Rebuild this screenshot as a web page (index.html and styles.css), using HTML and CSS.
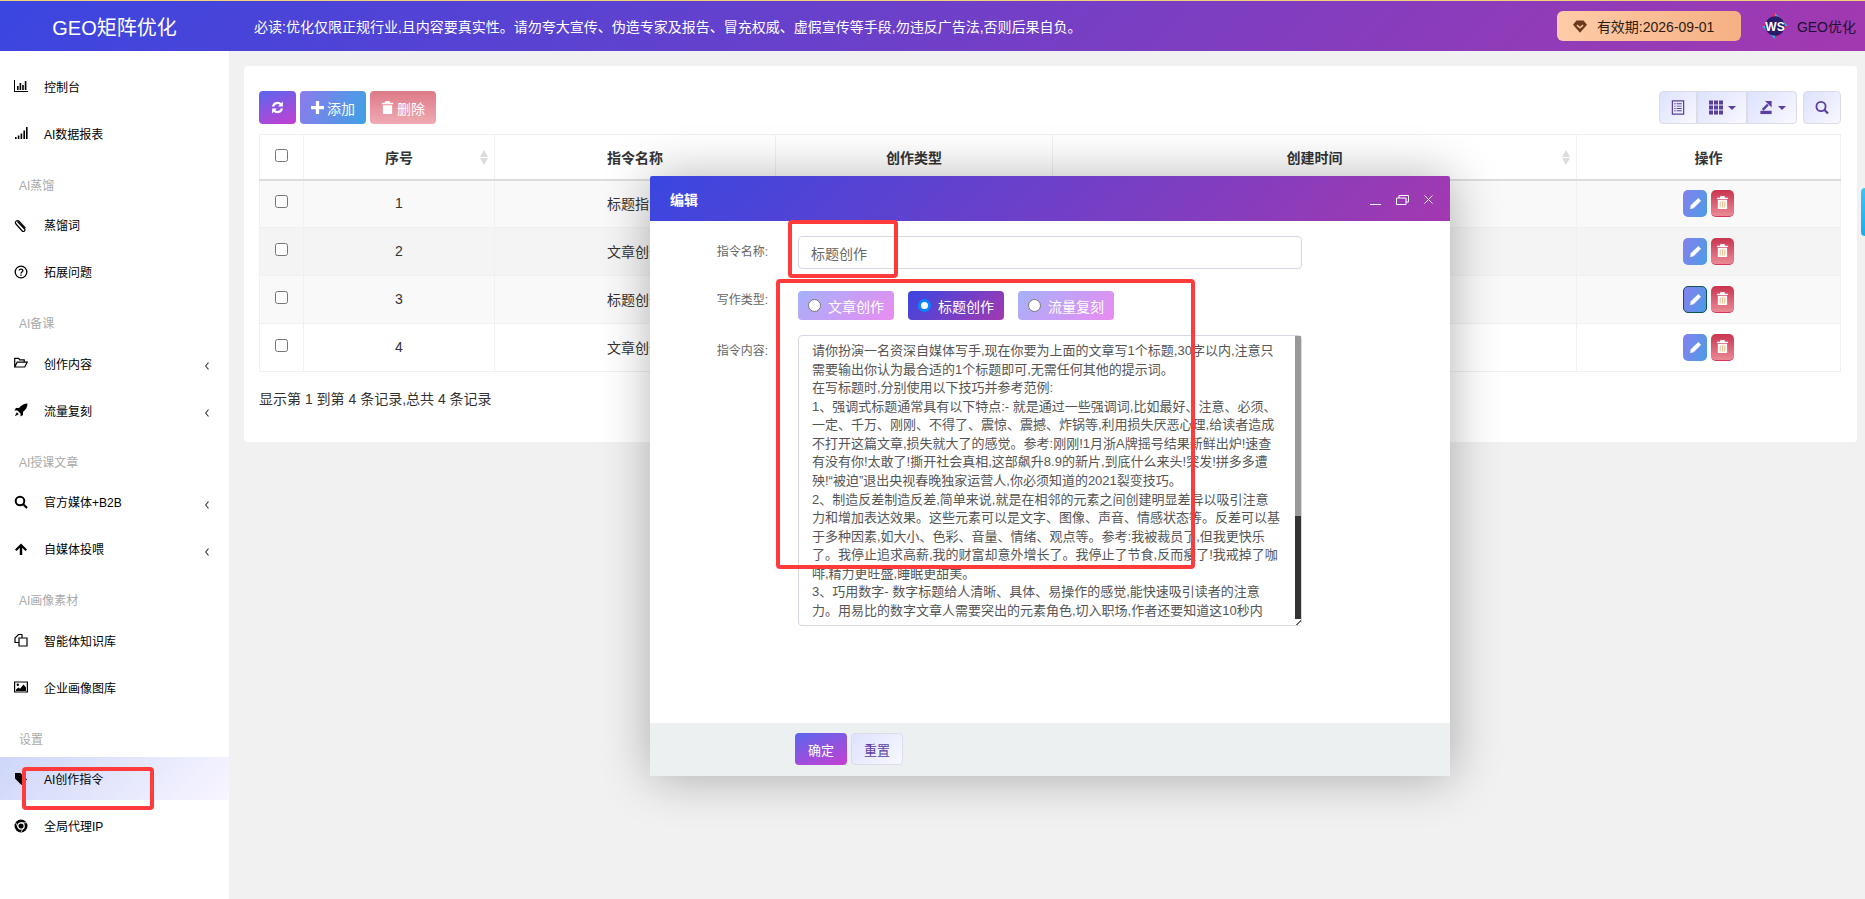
FILE: index.html
```html
<!DOCTYPE html>
<html lang="zh-CN">
<head>
    <meta charset="UTF-8">
    <meta name="viewport" content="width=device-width, initial-scale=1.0">
    <title>AI创作指令</title>
    <link rel="stylesheet" href="styles.css">
</head>
<body>
    <header class="topbar">
        <div class="logo">GEO矩阵优化</div>
        <div class="notice">必读:优化仅限正规行业,且内容要真实性。请勿夸大宣传、伪造专家及报告、冒充权威、虚假宣传等手段,勿违反广告法,否则后果自负。</div>
        <div class="expire">
            <svg class="expire-icon" viewBox="0 0 16 14"><path d="M4 0h8l4 5-8 9-8-9z" fill="#6b3a1c"/><path d="M4.500 5.500 8 8.500l3.500-3" fill="none" stroke="#f7c09a" stroke-width="1.800"/></svg>
            <span>有效期:2026-09-01</span>
        </div>
        <svg class="avatar" viewBox="0 0 26 26">
            <path d="M13 0 26 13 13 26 0 13z" fill="#e0245e"/>
            <path d="M13 0 26 13H21L13 5zM0 13l13 13v-5L5 13z" fill="#25b5f0"/>
            <circle cx="13" cy="13" r="9.800" fill="#2a1a6b"/>
            <text x="13" y="17.500" class="avatar-text">WS</text>
        </svg>
        <div class="user-name">GEO优化</div>
    </header>

    <div class="layout">
        <aside class="sidebar">
            <div class="nav-item">
                <svg class="nav-icon" viewBox="0 0 14 14"><path d="M0 1h1v11h13v1H0z"/><path d="M3 7h1.600v4H3zM5.600 4h1.600v7H5.600zM8.200 6h1.600v5H8.200zM10.800 2h1.600v9h-1.600z"/></svg>
                <span>控制台</span>
            </div>
            <div class="nav-item">
                <svg class="nav-icon" viewBox="0 0 14 14"><path d="M1 11h1.600v2H1zM3.800 9.500h1.600V13H3.800zM6.600 7.500h1.600V13H6.600zM9.400 4.500H11V13H9.400zM12 1h1.600v12H12z"/></svg>
                <span>AI数据报表</span>
            </div>

            <div class="nav-title">AI蒸馏</div>
            <div class="nav-item">
                <svg class="nav-icon" viewBox="0 0 14 14"><path d="M3.500 3.500 10.500 11a1.500 1.500 0 0 1-2.300 2L2 6a2 2 0 0 1 3-2.800l6.500 7" fill="none" stroke="#000" stroke-width="1.200"/></svg>
                <span>蒸馏词</span>
            </div>
            <div class="nav-item">
                <svg class="nav-icon" viewBox="0 0 14 14"><circle cx="7" cy="7" r="5.800" fill="none" stroke="#000" stroke-width="1.300"/><path d="M5.200 5.600C5.200 3.600 8.900 3.700 8.900 5.600 8.900 7 7 7 7 8.500" fill="none" stroke="#000" stroke-width="1.300"/><path d="M6.300 9.400h1.400v1.300H6.300z"/></svg>
                <span>拓展问题</span>
            </div>

            <div class="nav-title">AI备课</div>
            <div class="nav-item">
                <svg class="nav-icon" viewBox="0 0 14 14"><path d="M.7 11V2.300h4l1 1.500h4.500v2.400M.7 11l2.500-4.800h10L10.700 11z" fill="none" stroke="#000" stroke-width="1.200"/></svg>
                <span>创作内容</span>
                <svg class="nav-arrow" viewBox="0 0 4 8"><path d="M3.500.5 .7 4l2.800 3.500" fill="none" stroke="#333" stroke-width="1.100"/></svg>
            </div>
            <div class="nav-item">
                <svg class="nav-icon" viewBox="0 0 14 14"><path d="M13.500.5C10 .5 7.500 2 5 5H2L.5 7.500h3L6.500 10.500v3L9 12V9c3-2.500 4.500-5 4.500-8.500z"/><path d="M2.800 9.200.8 13.200l4-2z"/></svg>
                <span>流量复刻</span>
                <svg class="nav-arrow" viewBox="0 0 4 8"><path d="M3.500.5 .7 4l2.800 3.500" fill="none" stroke="#333" stroke-width="1.100"/></svg>
            </div>

            <div class="nav-title">AI授课文章</div>
            <div class="nav-item">
                <svg class="nav-icon" viewBox="0 0 14 14"><circle cx="6" cy="6" r="4.300" fill="none" stroke="#000" stroke-width="2"/><path d="M9 9l4 4" stroke="#000" stroke-width="2.200"/></svg>
                <span>官方媒体+B2B</span>
                <svg class="nav-arrow" viewBox="0 0 4 8"><path d="M3.500.5 .7 4l2.800 3.500" fill="none" stroke="#333" stroke-width="1.100"/></svg>
            </div>
            <div class="nav-item">
                <svg class="nav-icon" viewBox="0 0 14 14"><path d="M7 1.500 13 7.500l-1.500 1.500L8.200 5.800V13H5.800V5.800L2.500 9 1 7.500z"/></svg>
                <span>自媒体投喂</span>
                <svg class="nav-arrow" viewBox="0 0 4 8"><path d="M3.500.5 .7 4l2.800 3.500" fill="none" stroke="#333" stroke-width="1.100"/></svg>
            </div>

            <div class="nav-title">AI画像素材</div>
            <div class="nav-item">
                <svg class="nav-icon" viewBox="0 0 14 14"><path d="M4.500 9.500H1V5l3.500-3.500H8V5M5 5h8v8H5z" fill="none" stroke="#000" stroke-width="1.200"/></svg>
                <span>智能体知识库</span>
            </div>
            <div class="nav-item">
                <svg class="nav-icon" viewBox="0 0 14 14"><path d="M.6 2h12.800v10H.6z" fill="none" stroke="#000" stroke-width="1.200"/><circle cx="3.800" cy="4.800" r="1.200"/><path d="M2 11V9.500l2.500-2 1.500 1.200L9.500 4.500 12 7.500V11z"/></svg>
                <span>企业画像图库</span>
            </div>

            <div class="nav-title">设置</div>
            <div class="nav-item active">
                <svg class="nav-icon" viewBox="0 0 14 14"><path d="M1 1h5.500L13 7.500 7.500 13 1 6.500z"/></svg>
                <span>AI创作指令</span>
            </div>
            <div class="nav-item">
                <svg class="nav-icon" viewBox="0 0 14 14"><circle cx="7" cy="7" r="6.500"/><circle cx="7" cy="7" r="3.200" fill="none" stroke="#fff" stroke-width="1.200"/><path d="M7 3.800h5.500M4.300 8.500 1.800 4M9.800 8.500 7 13" stroke="#fff" stroke-width=".8"/></svg>
                <span>全局代理IP</span>
            </div>
        </aside>

        <main class="main">
            <div class="card">
                <div class="toolbar">
                    <button class="btn btn-refresh">
                        <svg class="btn-icon" viewBox="0 0 14 14"><path d="M2.200 6A5 5 0 0 1 10.800 3.700" fill="none" stroke="#fff" stroke-width="2.400"/><path d="M12.800.6v5.200H7.600z" fill="#fff"/><path d="M11.800 8A5 5 0 0 1 3.200 10.300" fill="none" stroke="#fff" stroke-width="2.400"/><path d="M1.200 13.400V8.200h5.200z" fill="#fff"/></svg>
                    </button>
                    <button class="btn btn-add">
                        <svg class="btn-icon" viewBox="0 0 12 12"><path d="M4.500 0h3v4.500H12v3H7.500V12h-3V7.500H0v-3h4.500z" fill="#fff"/></svg>
                        添加
                    </button>
                    <button class="btn btn-del">
                        <svg class="btn-icon" viewBox="0 0 12 14"><path d="M4 0h4l1 2h3v1.500H0V2h3zM1 4.500h10V14H1z" fill="#fff"/></svg>
                        删除
                    </button>
                    <div class="tool-group">
                        <button class="tool tool-first">
                            <svg class="tool-icon" viewBox="0 0 14 16"><path d="M1 1h12v14H1z" fill="none" stroke="#5a3f9f" stroke-width="1.300"/><path d="M3 3.500h1.500v1H3zM3 6h1.500v1H3zM3 8.500h1.500v1H3zM3 11h1.500v1H3zM5.500 3.500H11v1H5.500zM5.500 6H11v1H5.500zM5.500 8.500H11v1H5.500zM5.500 11H11v1H5.500z" fill="#5a3f9f"/></svg>
                        </button>
                        <button class="tool tool-wide">
                            <svg class="tool-icon" viewBox="0 0 14 14"><path d="M0 0h4v4H0zM5 0h4v4H5zM10 0h4v4h-4zM0 5h4v4H0zM5 5h4v4H5zM10 5h4v4h-4zM0 10h4v4H0zM5 10h4v4H5zM10 10h4v4h-4z" fill="#5a3f9f"/></svg>
                            <span class="caret"></span>
                        </button>
                        <button class="tool tool-wide tool-last">
                            <svg class="tool-icon" viewBox="0 0 14 16"><path d="M1 11.500h12V15H1z" fill="#5a3f9f"/><path d="M3.500 10.500 9 5" stroke="#5a3f9f" stroke-width="2.600"/><path d="M6 1h7v7z" fill="#5a3f9f"/></svg>
                            <span class="caret"></span>
                        </button>
                    </div>
                    <button class="tool tool-search">
                        <svg class="tool-icon" viewBox="0 0 14 14"><circle cx="6" cy="6" r="4.600" fill="none" stroke="#5a3f9f" stroke-width="1.800"/><path d="M9.300 9.300 13 13" stroke="#5a3f9f" stroke-width="2.200"/></svg>
                    </button>
                </div>

                <table class="grid">
                    <colgroup>
                        <col class="col-check"><col class="col-id"><col class="col-name"><col class="col-type"><col class="col-time"><col class="col-ops">
                    </colgroup>
                    <thead>
                        <tr>
                            <th><input type="checkbox" class="check"></th>
                            <th>序号<span class="sort"></span></th>
                            <th>指令名称</th>
                            <th>创作类型</th>
                            <th>创建时间<span class="sort"></span></th>
                            <th>操作</th>
                        </tr>
                    </thead>
                    <tbody>
                        <tr class="row-odd">
                            <td><input type="checkbox" class="check"></td><td>1</td><td>标题指令</td><td>标题创作</td><td></td>
                            <td><div class="ops">
                                <button class="op op-edit"><svg viewBox="0 0 14 14"><path d="M10 1l3 3-8 8-4 1 1-4z" fill="#fff"/></svg></button>
                                <button class="op op-del"><svg viewBox="0 0 12 14"><path d="M4 0h4l1 2h3v1.200H0V2h3zM1 4h10v10H1z" fill="#fff"/><path d="M3.500 5.500v7M6 5.500v7M8.500 5.500v7" stroke="#f0b48a"/></svg></button>
                            </div></td>
                        </tr>
                        <tr class="row-even">
                            <td><input type="checkbox" class="check"></td><td>2</td><td>文章创作</td><td>文章创作</td><td></td>
                            <td><div class="ops">
                                <button class="op op-edit"><svg viewBox="0 0 14 14"><path d="M10 1l3 3-8 8-4 1 1-4z" fill="#fff"/></svg></button>
                                <button class="op op-del"><svg viewBox="0 0 12 14"><path d="M4 0h4l1 2h3v1.200H0V2h3zM1 4h10v10H1z" fill="#fff"/><path d="M3.500 5.500v7M6 5.500v7M8.500 5.500v7" stroke="#f0b48a"/></svg></button>
                            </div></td>
                        </tr>
                        <tr class="row-odd">
                            <td><input type="checkbox" class="check"></td><td>3</td><td>标题创作</td><td>标题创作</td><td></td>
                            <td><div class="ops">
                                <button class="op op-edit op-focus"><svg viewBox="0 0 14 14"><path d="M10 1l3 3-8 8-4 1 1-4z" fill="#fff"/></svg></button>
                                <button class="op op-del"><svg viewBox="0 0 12 14"><path d="M4 0h4l1 2h3v1.200H0V2h3zM1 4h10v10H1z" fill="#fff"/><path d="M3.500 5.500v7M6 5.500v7M8.500 5.500v7" stroke="#f0b48a"/></svg></button>
                            </div></td>
                        </tr>
                        <tr>
                            <td><input type="checkbox" class="check"></td><td>4</td><td>文章创作</td><td>文章创作</td><td></td>
                            <td><div class="ops">
                                <button class="op op-edit"><svg viewBox="0 0 14 14"><path d="M10 1l3 3-8 8-4 1 1-4z" fill="#fff"/></svg></button>
                                <button class="op op-del"><svg viewBox="0 0 12 14"><path d="M4 0h4l1 2h3v1.200H0V2h3zM1 4h10v10H1z" fill="#fff"/><path d="M3.500 5.500v7M6 5.500v7M8.500 5.500v7" stroke="#f0b48a"/></svg></button>
                            </div></td>
                        </tr>
                    </tbody>
                </table>

                <div class="pager-info">显示第 1 到第 4 条记录,总共 4 条记录</div>
            </div>
        </main>
    </div>

    <div class="side-tab"></div>

    <section class="modal">
        <div class="modal-head">
            <span class="modal-title">编辑</span>
            <div class="modal-controls">
                <span class="ctl-min"></span>
                <svg class="ctl-max" viewBox="0 0 13 10"><path d="M.5 3h9.500v6.500H.5zM3 3V.5h9.500V7H10" fill="none" stroke="#fff"/></svg>
                <svg class="ctl-close" viewBox="0 0 9 9"><path d="M.5.500l8 8M8.500.500l-8 8" stroke="#fff" stroke-width="1"/></svg>
            </div>
        </div>
        <div class="modal-body">
            <label class="form-label">指令名称:</label>
            <input class="form-input" type="text" value="标题创作">

            <label class="form-label label-flush">写作类型:</label>
            <div class="radios">
                <div class="radio-pill"><span class="radio-dot"></span>文章创作</div>
                <div class="radio-pill selected"><span class="radio-dot"></span>标题创作</div>
                <div class="radio-pill"><span class="radio-dot"></span>流量复刻</div>
            </div>

            <label class="form-label">指令内容:</label>
            <div class="text-wrap">
                <textarea class="form-text" readonly>请你扮演一名资深自媒体写手,现在你要为上面的文章写1个标题,30字以内,注意只需要输出你认为最合适的1个标题即可,无需任何其他的提示词。
在写标题时,分别使用以下技巧并参考范例:
1、强调式标题通常具有以下特点:- 就是通过一些强调词,比如最好、注意、必须、一定、千万、刚刚、不得了、震惊、震撼、炸锅等,利用损失厌恶心理,给读者造成不打开这篇文章,损失就大了的感觉。参考:刚刚!1月浙A牌摇号结果新鲜出炉!速查有没有你!太敢了!撕开社会真相,这部飙升8.9的新片,到底什么来头!突发!拼多多遭殃!“被迫”退出央视春晚独家运营人,你必须知道的2021裂变技巧。
2、制造反差制造反差,简单来说,就是在相邻的元素之间创建明显差异以吸引注意力和增加表达效果。这些元素可以是文字、图像、声音、情感状态等。反差可以基于多种因素,如大小、色彩、音量、情绪、观点等。参考:我被裁员了,但我更快乐了。我停止追求高薪,我的财富却意外增长了。我停止了节食,反而瘦了!我戒掉了咖啡,精力更旺盛,睡眠更甜美。
3、巧用数字- 数字标题给人清晰、具体、易操作的感觉,能快速吸引读者的注意力。用易比的数字文章人需要突出的元素角色,切入职场,作者还要知道这10秒内</textarea>
                <div class="scroll-track"><div class="scroll-thumb"></div></div>
                <div class="scroll-corner"></div>
            </div>
        </div>
        <div class="modal-foot">
            <button class="foot-btn foot-ok">确定</button>
            <button class="foot-btn foot-reset">重置</button>
        </div>
    </section>

    <div class="mark mark-nav"></div>
    <div class="mark mark-input"></div>
    <div class="mark mark-form"></div>
</body>
</html>
```

FILE: styles.css
```css
* {
    box-sizing: border-box;
}

html, body {
    height: 100%;
}

body {
    position: relative;
    margin: 0;
    height: 899px;
    overflow: hidden;
    font-family: "Liberation Sans", "Noto Sans CJK SC", sans-serif;
    font-size: 14px;
    color: #333;
    background: #f1f1f1;
}

button {
    font-family: inherit;
    cursor: pointer;
}

/* top bar */
.topbar {
    display: flex;
    align-items: center;
    height: 51px;
    padding-right: 9px;
    border-top: 1px solid #f0d27a;
    color: #fff;
    background: linear-gradient(135deg, #3a46e0, #a339b0);
}

.logo {
    width: 229px;
    flex: none;
    text-align: center;
    font-size: 20px;
}

.notice {
    margin-left: 25px;
    font-size: 14px;
}

.expire {
    display: flex;
    align-items: center;
    gap: 10px;
    width: 184px;
    height: 30px;
    margin-left: auto;
    padding-left: 16px;
    border-radius: 6px;
    color: #2e1b10;
    background: linear-gradient(90deg, #ffcba8, #f5b083);
}

.expire-icon {
    width: 14px;
    height: 13px;
}

.avatar {
    width: 26px;
    height: 26px;
    margin-left: 21px;
}

.avatar-text {
    font-size: 12px;
    font-weight: bold;
    fill: #fff;
    text-anchor: middle;
}

.user-name {
    margin-left: 9px;
    color: #1d1030;
}

.layout {
    display: flex;
    height: 848px;
}

/* sidebar */
.sidebar {
    width: 229px;
    flex: none;
    padding-top: 13.5px;
    font-size: 12px;
    color: #000;
    background: #fff;
}

.nav-item {
    display: flex;
    align-items: center;
    height: 43px;
    margin-bottom: 4px;
    padding: 0 20px 0 14px;
}

.nav-item.active {
    background: linear-gradient(135deg, #ced6f9, #f8f6ff);
}

.nav-icon {
    width: 14px;
    height: 14px;
    margin-right: 16px;
    flex: none;
}

.nav-arrow {
    width: 4px;
    height: 8px;
    margin: 6px 0 0 auto;
}

.nav-title {
    height: 44.6px;
    padding: 20px 0 0 19px;
    line-height: 15px;
    color: #aaa;
}

/* content card */
.main {
    flex: 1;
    padding: 15px 9px 0 15px;
}

.card {
    padding: 25px 16px 33px 15px;
    border-radius: 4px;
    background: #fff;
}

.toolbar {
    display: flex;
    align-items: stretch;
    gap: 4px;
    height: 33px;
    margin-bottom: 10px;
}

.btn {
    display: flex;
    align-items: center;
    justify-content: center;
    gap: 3px;
    padding: 0;
    border: 0;
    border-radius: 4px;
    font-size: 14px;
    color: #fff;
}

.btn-icon {
    width: 13px;
    height: 13px;
}

.btn-refresh {
    width: 37px;
    background: linear-gradient(160deg, #5a66ee, #c63fd2);
}

.btn-add {
    width: 66px;
    background: linear-gradient(110deg, #8c7bec, #3ea1e5);
}

.btn-del {
    width: 66px;
    background: linear-gradient(180deg, #dd7a88, #f0aab3);
}

.tool-group {
    display: flex;
    margin-left: auto;
}

.tool {
    display: flex;
    align-items: center;
    justify-content: center;
    gap: 5px;
    width: 38px;
    padding: 0;
    border: 1px solid #dcdce6;
    background: linear-gradient(135deg, #dde2ff, #f8f8ff);
}

.tool-first {
    border-radius: 4px 0 0 4px;
}

.tool-wide {
    width: 50px;
}

.tool-last {
    border-radius: 0 4px 4px 0;
}

.tool-search {
    margin-left: 2px;
    border-radius: 4px;
}

.tool-icon {
    width: 14px;
    height: 15px;
}

.caret {
    width: 0;
    height: 0;
    border-top: 4px solid #5a3f9f;
    border-left: 4px solid transparent;
    border-right: 4px solid transparent;
}

/* table */
.grid {
    width: 1581px;
    table-layout: fixed;
    border-collapse: collapse;
    border: 1px solid #f0f0f0;
}

.col-check { width: 44px; }
.col-id { width: 191px; }
.col-name { width: 281px; }
.col-type { width: 277px; }
.col-time { width: 524px; }
.col-ops { width: 264px; }

.grid th {
    position: relative;
    height: 45px;
    padding: 0;
    border: 1px solid #f0f0f0;
    border-bottom: 2px solid #ddd;
    font-size: 14px;
    font-weight: bold;
    color: #333;
}

.grid td {
    height: 48px;
    padding: 0 0 1px;
    border: 1px solid #f0f0f0;
    text-align: center;
}

.row-odd td {
    background: #f9f9f9;
}

.row-even td {
    background: #f4f4f4;
}

.check {
    width: 13px;
    height: 13px;
    margin: 0 0 4px;
    vertical-align: middle;
}

.sort {
    position: absolute;
    top: 15px;
    right: 6px;
    width: 8px;
    height: 15px;
}

.sort::before,
.sort::after {
    content: "";
    position: absolute;
    left: 0;
    border-left: 4px solid transparent;
    border-right: 4px solid transparent;
}

.sort::before {
    top: 0;
    border-bottom: 7px solid #dcdcdc;
}

.sort::after {
    bottom: 0;
    border-top: 7px solid #dcdcdc;
}

.ops {
    display: flex;
    justify-content: center;
    gap: 4px;
}

.op {
    display: flex;
    align-items: center;
    justify-content: center;
    height: 27px;
    padding: 0;
    border: 0;
    border-radius: 5px;
}

.op svg {
    width: 13px;
    height: 13px;
}

.op-edit {
    width: 24px;
    background: linear-gradient(110deg, #8680ee, #4a9ce6);
}

.op-focus {
    border: 1px solid #0f5550;
}

.op-del {
    width: 23px;
    border-bottom: 1px solid #d43a58;
    background: linear-gradient(180deg, #c93450, #ea8a96);
}

.pager-info {
    margin-top: 17px;
    line-height: 20px;
}

.side-tab {
    position: absolute;
    top: 188px;
    right: 0;
    width: 4px;
    height: 48px;
    border-radius: 6px 0 0 6px;
    background: linear-gradient(180deg, #3cc4f8, #16aef0);
}

/* modal */
.modal {
    position: absolute;
    top: 176px;
    left: 650px;
    display: flex;
    flex-direction: column;
    width: 800px;
    height: 600px;
    border-radius: 2px;
    background: #fff;
    box-shadow: 1px 1px 50px rgba(0, 0, 0, .3);
}

.modal-head {
    display: flex;
    align-items: center;
    justify-content: space-between;
    height: 45px;
    padding: 0 17px 0 20px;
    border-radius: 2px 2px 0 0;
    color: #fff;
    background: linear-gradient(135deg, #3a46e0, #a339b0);
}

.modal-title {
    font-size: 14px;
    font-weight: bold;
}

.modal-controls {
    display: flex;
    align-items: flex-end;
    gap: 15px;
    height: 12px;
}

.ctl-min {
    width: 11px;
    height: 1px;
    background: #fff;
}

.ctl-max {
    width: 13px;
    height: 10px;
}

.ctl-close {
    width: 9px;
    height: 9px;
    margin-bottom: 1px;
}

.modal-body {
    flex: 1;
    display: grid;
    grid-template-columns: 118px 504px;
    grid-template-rows: 55px 44px 291px;
    column-gap: 30px;
    padding-top: 15px;
}

.form-label {
    padding-top: 7px;
    text-align: right;
    font-size: 12px;
    line-height: 18px;
    color: #666;
}

.label-flush {
    padding-top: 0;
}

.form-input {
    height: 33px;
    padding: 0 12px;
    border: 1px solid #d5d9e2;
    border-radius: 4px;
    font-family: inherit;
    font-size: 14px;
    color: #666;
    outline: none;
}

.radios {
    display: flex;
    gap: 14px;
    height: 29px;
}

.radio-pill {
    display: flex;
    align-items: center;
    gap: 7px;
    width: 96px;
    padding-left: 10px;
    border-radius: 4px;
    color: #fff;
    background: linear-gradient(135deg, #a5b1fa, #e98cf0);
}

.radio-pill.selected {
    background: linear-gradient(135deg, #3a46e0, #a339b0);
}

.radio-dot {
    width: 13px;
    height: 13px;
    border: 1px solid #777;
    border-radius: 50%;
    background: #fff;
}

.selected .radio-dot {
    border: 3px solid #0a84ff;
}

.text-wrap {
    position: relative;
    height: 291px;
}

.form-text {
    display: block;
    width: 100%;
    height: 100%;
    padding: 6px 20px 0 13px;
    border: 1px solid #d5d9e2;
    border-radius: 4px;
    overflow: hidden;
    resize: none;
    font-family: inherit;
    font-size: 13px;
    line-height: 18.57px;
    color: #555;
    outline: none;
}

.scroll-track {
    position: absolute;
    top: 1px;
    right: 1px;
    bottom: 7px;
    width: 6px;
    background: #333;
}

.scroll-thumb {
    height: 180px;
    background: #999;
}

.scroll-corner {
    position: absolute;
    right: 1px;
    bottom: 1px;
    width: 6px;
    height: 6px;
    background: linear-gradient(135deg, #fff 55%, #666 55%, #666 70%, #fff 70%);
}

.modal-foot {
    display: flex;
    gap: 4px;
    height: 53px;
    padding: 10px 0 0 145px;
    background: #ecf0f1;
}

.foot-btn {
    width: 52px;
    height: 32px;
    padding: 0;
    border-radius: 4px;
    font-size: 13px;
}

.foot-ok {
    border: 0;
    color: #fff;
    background: linear-gradient(160deg, #5a66ee, #c63fd2);
}

.foot-reset {
    border: 1px solid #dcdce6;
    color: #5a3f9f;
    background: linear-gradient(135deg, #dde2ff, #f8f8ff);
}

/* red annotations drawn on top of the page */
.mark {
    position: absolute;
    border: 4px solid #ff3b3b;
    border-radius: 4px;
}

.mark-nav {
    top: 767px;
    left: 22px;
    width: 132px;
    height: 43px;
}

.mark-input {
    top: 220px;
    left: 788px;
    width: 110px;
    height: 58px;
}

.mark-form {
    top: 279px;
    left: 776px;
    width: 419px;
    height: 290px;
}
```
